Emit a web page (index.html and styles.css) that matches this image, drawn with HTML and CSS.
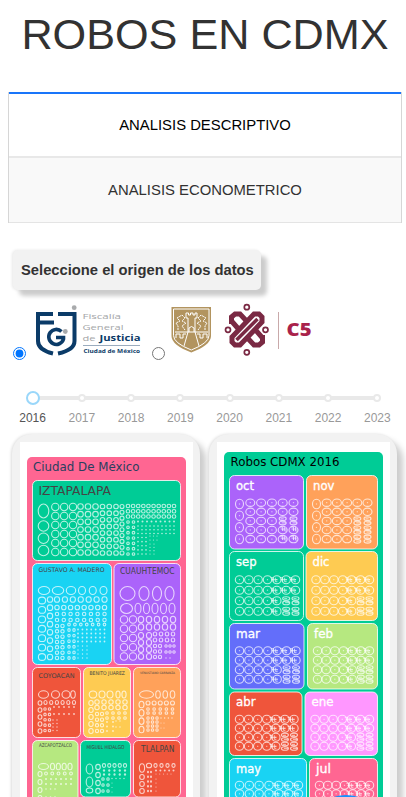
FILE: index.html
```html
<!DOCTYPE html>
<html lang="es">
<head>
<meta charset="utf-8">
<title>Robos en CDMX</title>
<link rel="stylesheet" href="styles.css">
</head>
<body>
<h1 class="title">ROBOS EN CDMX</h1>
<nav class="tabs">
  <div class="tab tab-active">ANALISIS DESCRIPTIVO</div>
  <div class="tab">ANALISIS ECONOMETRICO</div>
</nav>
<div class="prompt">Seleccione el origen de los datos</div>
<div class="sources">
  <input type="radio" name="origen" checked aria-label="Fiscalía">
  <svg class="logo-fgj" width="107" height="56" viewBox="35 303 107 56">
    <g fill="none" stroke="#0b3b68" stroke-width="4">
      <path d="M53 314H38V341Q38 350 53 353.5M40 322.5H54M58 314H74.5V341Q74.5 350 58 353.5"/>
      <path d="M61.500 331.500A7.500 7.500 0 1 0 63.500 339V337.500H56" stroke-width="3.600"/>
    </g>
    <circle cx="74.200" cy="307.700" r="2.400" fill="#a8aaac"/><circle cx="65.300" cy="331.500" r="2.400" fill="#a8aaac"/>
    <g class="logo-text" font-size="8" fill="#a4a6a8">
      <text x="82.500" y="318.500" textLength="38.500" lengthAdjust="spacingAndGlyphs">Fiscalía</text>
      <text x="82.500" y="329.500" textLength="41" lengthAdjust="spacingAndGlyphs">General</text>
      <text x="82.500" y="340.500" textLength="13" lengthAdjust="spacingAndGlyphs">de</text>
      <text x="99.500" y="340.500" textLength="41" lengthAdjust="spacingAndGlyphs" font-weight="700" fill="#0b3b68">Justicia</text>
      <text x="83.500" y="352.500" textLength="56.500" lengthAdjust="spacingAndGlyphs" font-size="5.500" font-weight="700" fill="#0b3b68">Ciudad de México</text>
    </g>
    <path d="M83 345.500H140" stroke="#8297ad" stroke-width=".8"/>
  </svg>
  <input type="radio" name="origen" class="radio-c5" aria-label="C5">
  <svg class="logo-c5" width="144" height="58" viewBox="170 302 144 58">
    <path d="M171.500 307H211V336Q211 345 191.300 352.500Q171.500 345 171.500 336Z" fill="#b2945f"/>
    <g fill="none" stroke="#fff" stroke-width="1">
      <path d="M173.500 309H209V335.500Q209 343 191.300 350Q173.500 343 173.500 335.500Z"/>
      <path d="M186 313V318H188V332M197 313V318H195V332M186 313H188.500V315H190.500V313H193V315H195V313H197M189 332V328Q191.500 325 194 328V332M175 332H208M188 332L184 346M195 332L199 346M176 338V334H180V338H183V334H186M197 334H200V338H203V334H207V338"/>
      <path d="M178 330V326L176 323L180 321L177 318L182 315L185 318L182 321L186 323L182 326L185 330M205 330V326L207 323L203 321L206 318L201 315L198 318L201 321L197 323L201 326L198 330" stroke-dasharray="2 .7"/>
    </g>
    <g fill="none" stroke="#7a2943" stroke-width="5">
      <path d="M254 314H259L262 317V322L240 345H235L232 342V337Z"/>
      <path d="M231.500 324V317L235 314H240L246.500 321"/>
      <path d="M262.500 335V342L259 345H254L247.500 338"/>
      <path d="M231.500 321L238.500 329M262.500 338L255.500 330"/>
      <path d="M257.500 319L236.500 340" stroke-width="3.500"/>
    </g>
    <g fill="#fff" stroke="#7a2943" stroke-width="1.700"><circle cx="246.800" cy="307.200" r="2.500"/><circle cx="246.800" cy="352.300" r="2.500"/><circle cx="228" cy="329.800" r="2.500"/><circle cx="265.500" cy="329.800" r="2.500"/></g>
    <path d="M278.500 312V349" stroke="#c9a9aa" stroke-width="1"/>
    <text class="logo-text" x="286.500" y="336" textLength="25" lengthAdjust="spacingAndGlyphs" font-size="18" font-weight="800" fill="#a9224b">C5</text>
  </svg>
</div>
<div class="years">
  <div class="year year-active"><i></i>2016</div><div class="year"><i></i>2017</div><div class="year"><i></i>2018</div><div class="year"><i></i>2019</div><div class="year"><i></i>2020</div><div class="year"><i></i>2021</div><div class="year"><i></i>2022</div><div class="year"><i></i>2023</div>
</div>
<main class="panels">
  <section class="panel"><div class="plot"><svg id="alcaldias" width="173" height="358" viewBox="20 442 173 358"></svg></div></section>
  <section class="panel"><div class="plot"><svg id="meses" width="173" height="358" viewBox="217 442 173 358"></svg></div></section>
</main>
<div class="fab"></div>
<script src="charts.js"></script>
</body>
</html>
```
FILE: styles.css
```css
* { box-sizing: border-box; }
html, body { height: 797px; overflow: hidden; }
body { margin: 0; padding: 0 4px 0 8px; background: #fff; color: #323232; font-family: "Liberation Sans", Arial, sans-serif; position: relative; }
.title { margin: 7px 0 0; height: 54px; font-size: 43.2px; line-height: 54px; font-weight: 400; text-align: center; white-space: nowrap; }
.tabs { margin-top: 31px; height: 131px; border: 1px solid #d6d6d6; border-top: 0; }
.tab { height: 65px; padding-bottom: 1px; display: flex; align-items: center; justify-content: center; font-size: 14.85px; background: #f9f9f9; border-bottom: 1px solid #e4e4e4; }
.tab-active { height: 66px; padding-bottom: 0; color: #000; background: #fff; border-top: 2px solid #1975fa; border-bottom: 2px solid #e8e8e8; }
.prompt { margin: 27px 0 0 5px; width: 248px; height: 40px; padding-left: 8px; border-radius: 5px; background: #f2f2f2; box-shadow: 6px 6px 4px #ccc, -1px 0 3px #e8e8e8; font-size: 14.75px; font-weight: 700; line-height: 40px; white-space: nowrap; position: relative; }
.sources { display: flex; align-items: flex-end; height: 58px; margin-top: 12px; padding-left: 5px; }
.sources input { width: 13px; height: 13px; margin: 0 9px 0 0; flex: none; }
.sources .radio-c5 { margin: 0 5px 0 10px; }
.logo-fgj, .logo-c5 { flex: none; }
.logo-fgj { margin-bottom: 1px; }
.logo-text { font-family: "Open Sans", sans-serif; }
.years { display: flex; width: 394px; margin: 30px 0 0; position: relative; }
.years::before { content: ""; position: absolute; left: 25px; top: 6px; width: 345px; height: 4px; background: #e9e9e9; }
.year { width: 49.25px; flex: none; display: flex; flex-direction: column; align-items: center; color: #999; font-size: 12px; line-height: 14px; position: relative; }
.year i { width: 8px; height: 8px; margin: 4px 0 9px; border: 2px solid #e9e9e9; border-radius: 50%; background: #fff; }
.year-active { color: #555; }
.year-active i { width: 14px; height: 14px; margin: 1px 0 6px; border-color: #9ad7fa; }
.panels { display: flex; gap: 9px; margin: 9px 0 0 4px; }
.panel { width: 188px; height: 390px; flex: none; padding: 8px; border-radius: 20px 20px 0 0; background: #f2f2f2; box-shadow: 6px 6px 6px #ccc, -1px 0 3px #ddd; }
.plot { width: 173px; height: 382px; background: #fff; }
.plot svg { display: block; }
.plot text { font-family: "DejaVu Sans", Verdana, sans-serif; }
.fab { position: fixed; left: 306px; top: 795px; width: 80px; height: 80px; border-radius: 50%; background: #1890ff; }
```
FILE: charts.js
```js
const NS = "http://www.w3.org/2000/svg";

function add(parent, name, attrs, text) {
  const node = document.createElementNS(NS, name);
  for (const key in attrs) node.setAttribute(key, attrs[key]);
  if (text) node.textContent = text;
  parent.appendChild(node);
  return node;
}

function box(svg, x, y, right, bottom, fill, framed) {
  add(svg, "rect", { x, y, width: right - x, height: bottom - y, rx: 5, fill, stroke: framed ? "#fff" : "none", "stroke-opacity": 0.8 });
}

function label(svg, text, x, y, width, size, fill) {
  add(svg, "text", { x, y, "font-size": size, fill, textLength: width, lengthAdjust: "spacingAndGlyphs" }, text);
}

// A block of rings: first centre, last centre, counts and radii.
function rings(svg, x1, y1, x2, y2, nx, ny, rx, ry) {
  for (let i = 0; i < nx; i++) for (let j = 0; j < ny; j++) {
    const cx = nx > 1 ? x1 + (x2 - x1) * i / (nx - 1) : x1;
    const cy = ny > 1 ? y1 + (y2 - y1) * j / (ny - 1) : y1;
    const dot = rx < 1.2;
    add(svg, "ellipse", { cx, cy, rx, ry, fill: dot ? "#fff" : "none", "fill-opacity": 0.7, stroke: dot ? "none" : "#fff", "stroke-opacity": 0.72, "stroke-width": 1.1 });
  }
}

const left = document.getElementById("alcaldias");
box(left, 27, 457, 186, 830, "#ff6692");
label(left, "Ciudad De México", 33, 471, 106.5, 12, "#2a3f5f");

const districts = [
  ["IZTAPALAPA", 32.5, 480.5, 180.5, 560.5, "#00cc96", 38.5, 495, 72.5, 12, [
    [43.5,511,43.5,511,1,1,5.3,7],[43.5,526,43.5,550.5,1,3,5.3,5.2],[55.3,507,73,552,3,6,3.7,3.7],
    [80.5,506.5,95.5,552.500,3,7,2.8,2.8],[102.5,506.5,116,553,3,8,2.3,2.3],[122,506.5,122,553,1,9,2,2],
    [128,506,174,516.5,10,3,1.8,1.8],[128,522,133.5,554,2,7,1.3,1.3],[138,521.5,174,521.5,9,1,1,1],
    [138,526,174,533.5,10,3,.8,.8],[138,537.5,146,554,3,5,.8,.8],[150,536,157,540,3,2,.6,.6],[150,544,154,554,2,4,.6,.6]]],
  ["GUSTAVO A. MADERO", 32.5, 563.5, 111.5, 664.5, "#19d3f3", 38.5, 571.8, 66, 6.3, [
    [44,590.5,58,590.5,2,1,5.7,4],[71,590.5,71,590.5,1,1,4.7,4],[82,590.5,103.500,590.5,3,1,3.5,4],
    [42,600.5,42,657,1,7,3.6,3.4],[50,599.5,50,657,1,8,2.7,2.8],[57,599.5,104.500,599.5,7,1,2.6,2.8],[57,607.5,104.500,607.5,8,1,2.2,2.3],
    [57,614,104.500,620,8,2,1.7,1.8],[57,626,62.500,658,2,7,1.7,1.7],[69,624.500,104.500,624.500,7,1,1.3,1.4],[69,630,74,658,2,6,1.2,1.4],
    [78,629.500,104.500,641.5,7,4,.9,.9],[78,646,87,658,3,4,.7,.7]]],
  ["CUAUHTEMOC", 114, 563.5, 180.5, 664.5, "#ab63fa", 120, 573.5, 54.5, 8.5, [
    [127.5,593.5,127.5,593.5,1,1,7.5,7],[144,593.5,144,593.5,1,1,5,7],[157,593.5,169.5,593.5,2,1,4.5,7],
    [126.5,608.5,126.5,608.5,1,1,6,5],[138,608.5,172,608.5,5,1,3,5.3],[124,619.5,133,656.5,2,5,3.7,3.7],
    [141,619.5,173,627,5,2,2.7,3.2],[141,635.5,149,656.5,2,4,2.6,3],[155,634,173,640,4,2,1.8,2],
    [155,646,160,657,2,3,1.6,1.7],[166,646,174,652,3,2,1.2,1.2],[166,658,170,658,2,1,.7,.7]]],
  ["COYOACAN",32.5,667.5,80.5,737.500,"#ef553b",38.5,677.5,36,6.5,[
    [43.500,694.5,43.500,694.5,1,1,5,3.7],[55.500,694.5,66,694.5,2,1,4,3.7],[73,694.5,73,694.5,1,1,2.3,3.7],
    [40,703,40,731,1,5,1.9,2.2],[45.500,702.5,74,702.5,6,1,1.6,2],[45,709,49.500,730.500,2,5,1.2,1.3],[54,707,74,714,5,2,.9,.9],[53,720,57,730.500,2,4,.7,.7]]],
  ["BENITO JUAREZ",83.500,667.500,130.500,737.500,"#fecb52",89.5,675.3,35.5,5.2,[
    [93,694.5,93,694.5,1,1,3.8,3.5],[102,694.5,110,694.5,2,1,3,3.5],[118,694.5,124,694.5,2,1,2.1,3.5],
    [91,703,91,731,1,5,2.2,2.5],[97,702,125,707.500,5,2,2.2,2.2],[97,714,102,731,2,4,1.6,1.7],[107,713,125,718,4,2,1.3,1.3],[107,722,113,731,2,3,.9,.9],[116,721,120,727,2,2,.7,.7]]],
  ["VENUSTIANO CARRANZA",133.5,667.5,180.5,737.500,"#ffa15a",140,674,35,3,[
    [146.5,694.5,146.5,694.5,1,1,7,3.7],[158,694.5,172.5,694.5,3,1,2.3,3.7],[141.500,704.500,141.500,729.500,1,4,2.5,3.3],[148,703,172.5,703,5,1,2,2],
    [148,709,172.5,713,5,2,1.3,1.3],[148,718,157,730,3,4,1.2,1.3],[161,718,172,720,4,1,.7,.7],[161,723,164,728,2,2,.5,.5]]],
  ["AZCAPOTZALCO",32.5,740.500,78,815,"#b6e880",39,746.5,33,5,[
    [43.5,766.5,43.5,766.5,1,1,5,3],[52.5,766.5,70,766.5,4,1,2.1,3.3],[40,774,40,798,1,4,2,2.5],[46,773.500,71,773.500,5,1,1.4,1.5],[46,779,71,784,6,2,1,1],[46,789,55,797,3,2,.8,.8]]],
  ["MIGUEL HIDALGO",80.5,740.500,130.500,797,"#00cc96",86.5,748.5,38,5.3,[
    [89.5,769,89.500,782,1,2,3.3,5],[89.5,790.5,89.5,790.5,1,1,3.3,2.5],[98,767,98,791,1,4,2.3,2.6],[104,765.5,125,765.5,5,1,1.6,1.9],[104,770.500,125,774.5,5,2,1.1,1.2],[103,779,108,791,2,3,1.2,1.3],[112,778.500,124,778.500,4,1,.7,.7],[112,783,112,792,1,3,.5,.5]]],
  ["TLALPAN",133.5,740.500,180.5,797,"#ef553b",141,751.500,33.500,9,[
    [142,768,142,768,1,1,2.6,4.2],[142,777,142,791,1,3,2.3,2.5],[149,765.5,149,765.5,1,1,2.6,2.3],[155.5,765.5,173.500,765.5,4,1,1.6,1.9],[148,772,151,791,2,5,1,1.2],[156,770.500,173.500,770.500,5,1,1,1],[156,774,171,774,5,1,.5,.5],[156,779,156,791,1,4,.6,.6]]]
];
for (const [name, x, y, r, b, color, tx, ty, tw, size, groups] of districts) {
  box(left, x, y, r, b, color, true);
  label(left, name, tx, ty, tw, size, "#444");
  for (const g of groups) rings(left, ...g);
}

const right = document.getElementById("meses");
box(right, 224, 452, 383, 830, "#00cc96");
label(right, "Robos CDMX 2016", 230.5, 466, 109, 12, "#000");

const months = [
  ["oct",229.5,475.5,303.5,549,"#ab63fa",18],["nov",306.5,475.5,377.500,549,"#ffa15a",21.5],
  ["sep",229.5,551.5,303.5,620.5,"#00cc96",20.5],["dic",306,551.5,377.500,620.5,"#fecb52",17],
  ["mar",229.5,623.5,304,689,"#636efa",24],["feb",307.5,623.5,377.500,689,"#b6e880",19],
  ["abr",229.5,692,302,755.5,"#ef553b",19.5],["ene",305,692,377.500,755.5,"#ff97ff",22],
  ["may",229.5,758.5,306.500,825,"#19d3f3",25],["jul",309.5,758.5,377.500,825,"#ff6692",15]
];
// First ring row and row step of each row of months.
const bands = [[502.7, 9.1], [579.7, 10.5], [650.7, 9.500], [719.3, 9], [785.3, 8.5]];

function scribble(x, y) {
  add(right, "path", { d: `M${x-3} ${y-2}h3v4m2-4v4h2m-6-2h6`, fill: "none", stroke: "#fff", "stroke-opacity": .7, "stroke-width": .9 });
}

months.forEach(([name,x,y,r,b,color,tw], index) => {
  box(right, x, y, r, b, color, true);
  add(right, "text", { x: x + 6.5, y: y + 14, "font-size": 12.5, fill: "#fff", stroke: "#fff", "stroke-width": .35, textLength: tw, lengthAdjust: "spacingAndGlyphs" }, name);
  const wide = index < 2;
  const cols = wide ? 6 : 7;
  const rows = wide ? 5 : 4;
  const [first, stepY] = bands[Math.floor(index / 2)];
  const stepX = (r - x - (wide ? 20 : 18)) / (cols - 1);
  for (let col = 0; col < cols; col++) {
    const cx = x + 10 + col * stepX;
    if (wide && col === 0) {
      rings(right, cx, 504, cx, 539, 1, 4, 4, 4.7);
      for (let j = 0; j < 4; j++) add(right, "path", { d: `M${cx-.6} ${504 + j * 11.7}h1.2`, stroke: "#fff", "stroke-opacity": .7 });
      continue;
    }
    for (let row = 0; row < rows; row++) {
      const cy = first + row * stepY;
      if (row > 1 && col >= cols - 2 && !(wide && index === 0 && row > 2)) {
        rings(right, cx, cy - 2.2, cx, cy + 2.200, 1, 2, 3.500, 1.8);
        add(right, "path", { d: `M${cx-2} ${cy-2}h3m-2 4h4`, stroke: "#fff", "stroke-opacity": .7 });
      } else {
        rings(right, cx, cy, cx, cy, 1, 1, wide ? 4.5 : 4.200, wide ? 3.7 : 4);
        add(right, "path", { d: `M${cx-.6} ${cy}h1.2`, stroke: "#fff", "stroke-opacity": .7 });
        if (!wide && col > 3) scribble(cx - 3.500, cy);
        if (wide && row > 2 && col > 3) scribble(cx, cy - 1);
      }
    }
  }
});
```
